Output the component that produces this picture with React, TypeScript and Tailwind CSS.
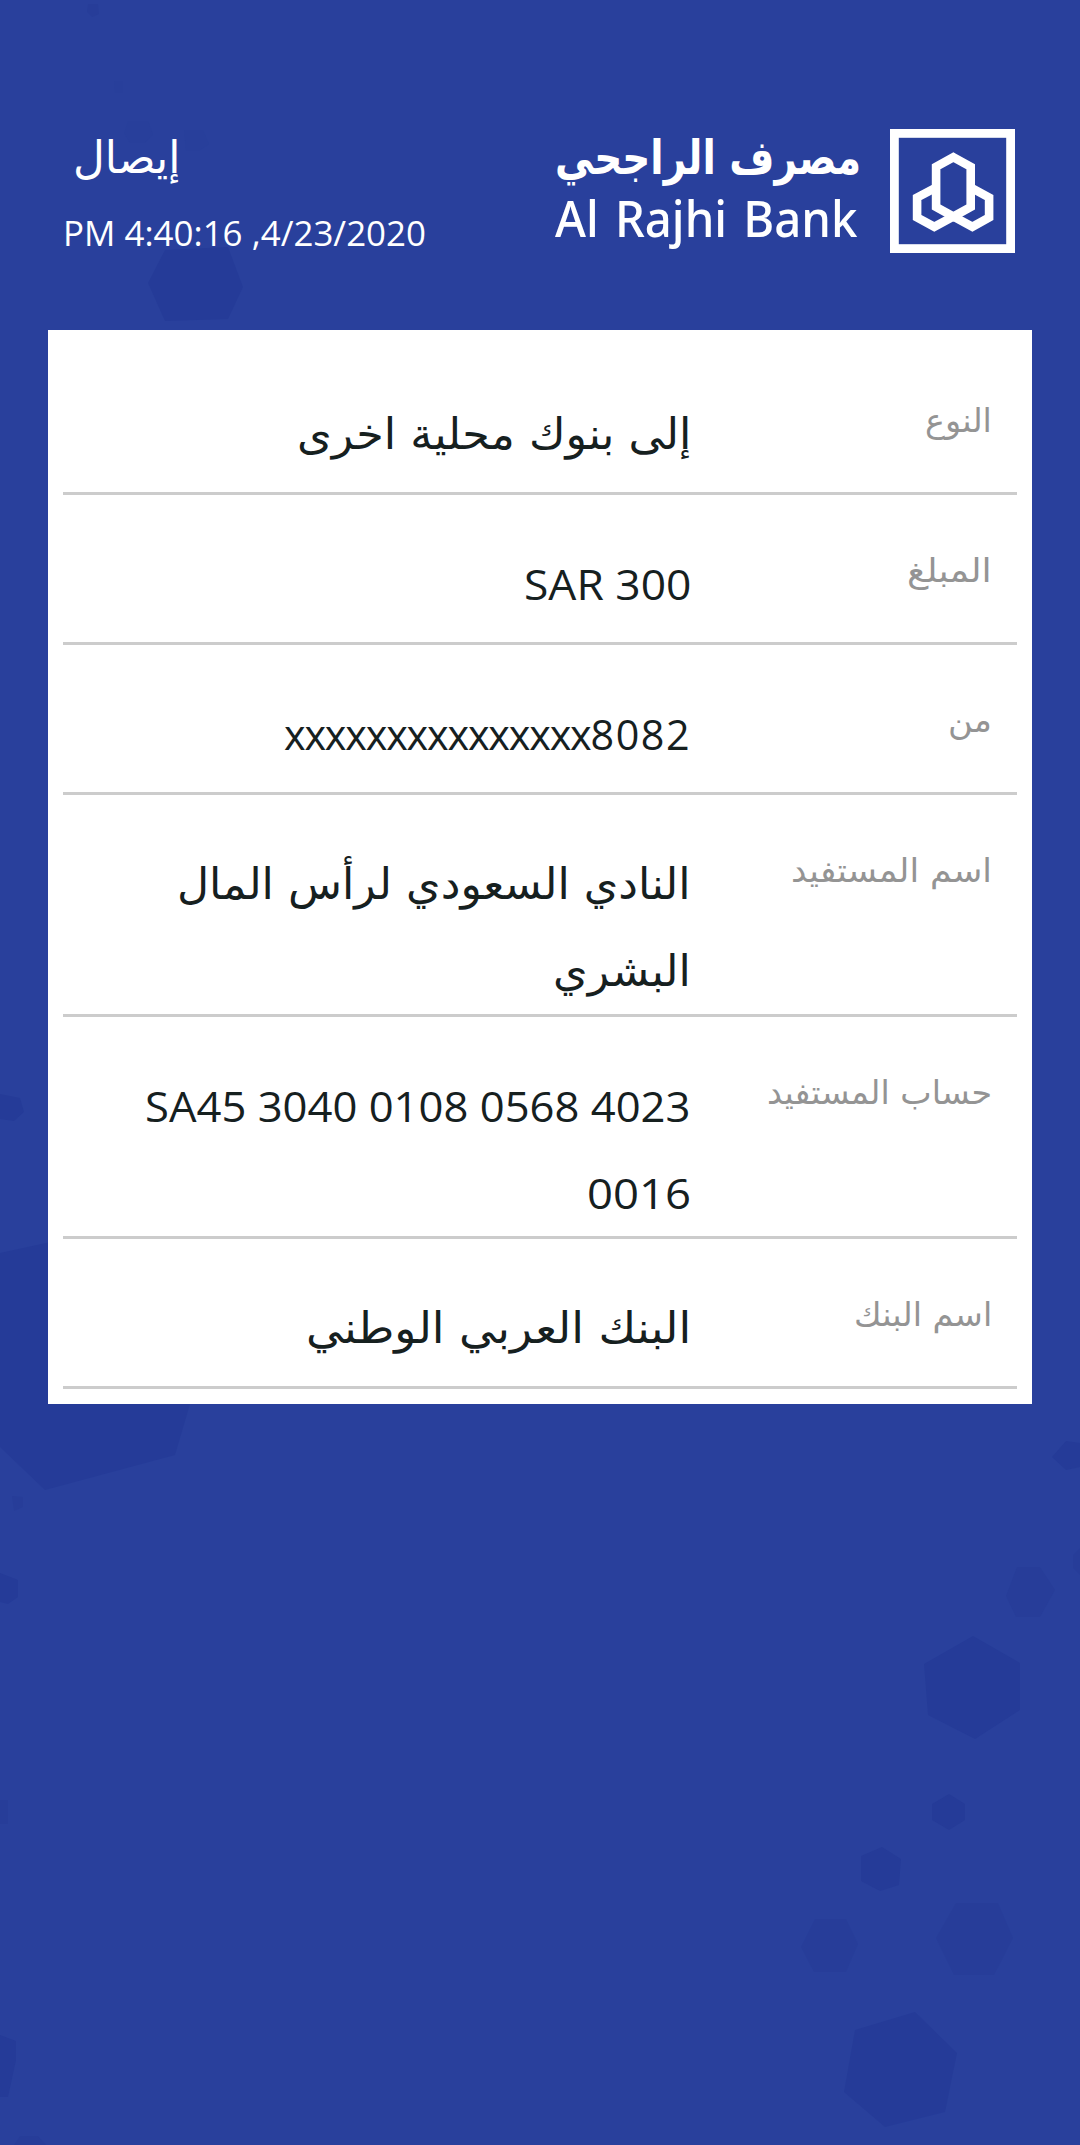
import { useLayoutEffect, useRef, useState, type ReactNode } from "react";

type FitProps = { width: string; className?: string; children: ReactNode };

/** One line of text, condensed or widened so that it fills its box. */
function Fit({ width, className = "", children }: FitProps) {
  const box = useRef<HTMLDivElement>(null);
  const text = useRef<HTMLSpanElement>(null);
  const [scale, setScale] = useState(1);

  useLayoutEffect(() => {
    if (box.current && text.current) {
      setScale(box.current.offsetWidth / text.current.offsetWidth);
    }
  }, []);

  return (
    <div ref={box} dir="ltr" className={`flex justify-start whitespace-nowrap ${width} ${className}`}>
      <span ref={text} className="shrink-0 origin-left" style={{ transform: `scaleX(${scale})` }}>
        {children}
      </span>
    </div>
  );
}

type Line = { text: ReactNode; width: string };
type RowData = { label: { text: string; width: string }; lines: Line[]; latin?: boolean };

const maskedAccount = (
  <>
    <span className="tracking-[-1.2px]">xxxxxxxxxxxxxxx</span>
    <span className="tracking-[1.6px]">8082</span>
  </>
);

const rows: RowData[] = [
  { label: { text: "النوع", width: "w-[67px]" }, lines: [{ text: "إلى بنوك محلية اخرى", width: "w-[394px]" }] },
  { label: { text: "المبلغ", width: "w-[85px]" }, lines: [{ text: "SAR 300", width: "w-[167px]" }], latin: true },
  { label: { text: "من", width: "w-[44px]" }, lines: [{ text: maskedAccount, width: "w-[407px]" }], latin: true },
  {
    label: { text: "اسم المستفيد", width: "w-[201px]" },
    lines: [
      { text: "النادي السعودي لرأس المال", width: "w-[514px]" },
      { text: "البشري", width: "w-[138px]" },
    ],
  },
  {
    label: { text: "حساب المستفيد", width: "w-[225px]" },
    lines: [
      { text: "SA45 3040 0108 0568 4023", width: "w-[546px]" },
      { text: "0016", width: "w-[104px]" },
    ],
    latin: true,
  },
  { label: { text: "اسم البنك", width: "w-[138px]" }, lines: [{ text: "البنك العربي الوطني", width: "w-[385px]" }] },
];

function Row({ label, lines, latin }: RowData) {
  const height = lines.length > 1 ? "h-[222px]" : "h-[150px]";
  const font = latin
    ? "pt-[45px] font-['Open_Sans','Noto_Sans',sans-serif] text-[42px]"
    : "pt-[46px] font-['DejaVu_Sans',sans-serif] text-[43px]";
  return (
    <div className={`flex items-start justify-between border-b-[3px] border-[#cccccc] pr-[25px] ${height}`}>
      <div className="pt-[49px]">
        <Fit width={label.width} className="font-['DejaVu_Sans',sans-serif] text-[33px] leading-[54px] text-[#949494]">
          {label.text}
        </Fit>
      </div>
      <div className={`flex w-[628px] flex-col items-start leading-[87px] text-[#16201f] ${font}`}>
        {lines.map((line, i) => (
          <Fit key={i} width={line.width}>
            {line.text}
          </Fit>
        ))}
      </div>
    </div>
  );
}

function Backdrop() {
  return (
    <svg className="pointer-events-none absolute inset-0" width="1080" height="2145" viewBox="0 0 1080 2145">
      <g fill="#253b98">
        <path d="M973 1636 1020 1663V1710L975 1739 928 1715 924 1664Z" />
        <path d="M915 2012 957 2053 945 2112 885 2127 844 2092 855 2030Z" />
        <path d="M949 1794 965 1804V1820L949 1830 932 1820V1804Z" />
        <path d="M882 1847 901 1859 899 1885 880 1891 861 1881 861 1856Z" />
        <path d="M1066 1441 1080 1443V1467L1066 1470 1052 1457Z" />
        <path d="M0 1253 60 1240 190 1404 175 1455 45 1490 0 1447Z" />
        <path d="M0 1094 20 1098 24 1112 14 1121 0 1119Z" />
        <path d="M0 1573 18 1580V1597L8 1604 0 1602Z" />
        <path d="M0 2035 16 2041V2060L8 2097H0Z" />
        <path d="M165 250 228 247 243 287 228 319 165 321 148 283Z" />
      </g>
      <g fill="#273d99">
        <path d="M12 1496 23 1497V1507L14 1511Z" />
        <path d="M88 4H98L99 14 92 17 87 12Z" />
        <path d="M815 1919H846L858 1944 846 1972H814L801 1947Z" />
        <path d="M956 1903H998L1013 1938 994 1975H954L936 1938Z" />
        <path d="M1017 1567H1040L1055 1590 1040 1617H1016L1006 1596Z" />
        <path d="M1080 1548 1073 1555V1568L1080 1575Z" />
        <path d="M0 1800H8V1824H0Z" />
        <path d="M20 2136H38L46 2145H14Z" />
      </g>
      <g fill="#283f9b">
        <path d="M114 81H123V93H115Z" />
        <path d="M128 121H148L153 134 145 143H130L124 133Z" />
        <path d="M184 130H203L209 144 199 151H186Z" />
      </g>
    </svg>
  );
}

function Emblem() {
  return (
    <svg className="h-[124px] w-[125px]" viewBox="0 0 125 124" fill="none" stroke="#fff">
      <rect x="4.4" y="4.4" width="116.2" height="115.2" strokeWidth="8.8" />
      <g strokeWidth="8.6" strokeLinejoin="miter">
        <path d="M63.4 28.2 80.7 37.8V78L63.4 87.5 46.1 78V37.8Z" />
        <path d="M46.1 58.5 27.1 68.5V88.5L44.3 97.8 63.4 87.5" />
        <path d="M80.7 58.5 99.1 68.5V88.5L82.4 97.8 63.4 87.5" />
      </g>
    </svg>
  );
}

export default function App() {
  return (
    <div dir="rtl" className="relative h-[2145px] w-[1080px] overflow-hidden bg-[#29409c]">
      <Backdrop />
      <div className="relative flex h-full flex-col px-[48px]">
        <header className="flex h-[330px] shrink-0 items-start justify-between pr-[17px] pl-[15px] pt-[129px]">
          <div className="flex gap-[29px]">
            <Emblem />
            <div className="flex flex-col items-end text-white">
              <Fit width="w-[306px]" className="h-[59px] font-['DejaVu_Sans',sans-serif] text-[47px] font-bold leading-[58px]">
                مصرف الراجحي
              </Fit>
              <Fit width="w-[302px]" className="font-['Noto_Sans',sans-serif] text-[50px] font-medium leading-[60px] [word-spacing:4px]">
                Al Rajhi Bank
              </Fit>
            </div>
          </div>
          <div className="flex flex-col items-end text-white">
            <div className="pl-[10px]">
              <Fit width="w-[107px]" className="font-['DejaVu_Sans',sans-serif] text-[45px] leading-[58px]">
                إيصال
              </Fit>
            </div>
            <Fit width="w-[363px]" className="pt-[16px] font-['Open_Sans','Noto_Sans',sans-serif] text-[35px] leading-[60px]">
              PM 4:40:16 ,4/23/2020
            </Fit>
          </div>
        </header>
        <main className="bg-white p-[15px]">
          {rows.map((row) => (
            <Row key={row.label.text} {...row} />
          ))}
        </main>
      </div>
    </div>
  );
}
